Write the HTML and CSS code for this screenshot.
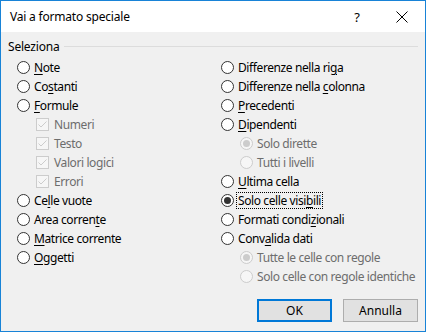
FILE: index.html
```html
<!DOCTYPE html>
<html lang="it">
<head>
<meta charset="utf-8">
<title>Vai a formato speciale</title>
<link rel="stylesheet" href="styles.css">
</head>
<body>
<div class="window">
  <div class="titlebar">
    <span class="title">Vai a formato speciale</span>
    <span class="tb-help">?</span>
    <span class="tb-close"><svg width="12" height="12" viewBox="0 0 12 12"><path d="M0.5 0.5 L11.5 11.5 M11.5 0.5 L0.5 11.5" stroke="#000" stroke-width="1" fill="none"/></svg></span>
  </div>
  <div class="body">
    <div class="legend"><span>Seleziona</span><span class="legend-line"></span></div>
    <div class="cols">
      <div class="col">
        <div class="opt"><span class="radio"></span><span><u>N</u>ote</span></div>
        <div class="opt"><span class="radio"></span><span>Co<u>s</u>tanti</span></div>
        <div class="opt"><span class="radio"></span><span><u>F</u>ormule</span></div>
        <div class="opt sub dis"><span class="check"><svg width="11" height="11" viewBox="0 0 11 11"><path d="M1.5 5.5 L4 8 L9.5 2.5" stroke="#cccccc" stroke-width="1" fill="none"/></svg></span><span>Numeri</span></div>
        <div class="opt sub dis"><span class="check"><svg width="11" height="11" viewBox="0 0 11 11"><path d="M1.5 5.5 L4 8 L9.5 2.5" stroke="#cccccc" stroke-width="1" fill="none"/></svg></span><span>Testo</span></div>
        <div class="opt sub dis"><span class="check"><svg width="11" height="11" viewBox="0 0 11 11"><path d="M1.5 5.5 L4 8 L9.5 2.5" stroke="#cccccc" stroke-width="1" fill="none"/></svg></span><span>Valori logici</span></div>
        <div class="opt sub dis"><span class="check"><svg width="11" height="11" viewBox="0 0 11 11"><path d="M1.5 5.5 L4 8 L9.5 2.5" stroke="#cccccc" stroke-width="1" fill="none"/></svg></span><span>Errori</span></div>
        <div class="opt"><span class="radio"></span><span>Ce<u>l</u>le vuote</span></div>
        <div class="opt"><span class="radio"></span><span>Area corren<u>t</u>e</span></div>
        <div class="opt"><span class="radio"></span><span><u>M</u>atrice corrente</span></div>
        <div class="opt"><span class="radio"></span><span><u>O</u>ggetti</span></div>
      </div>
      <div class="col">
        <div class="opt"><span class="radio"></span><span>Differenze nella ri<u>g</u>a</span></div>
        <div class="opt"><span class="radio"></span><span>Differenze nella <u>c</u>olonna</span></div>
        <div class="opt"><span class="radio"></span><span><u>P</u>recedenti</span></div>
        <div class="opt"><span class="radio"></span><span><u>D</u>ipendenti</span></div>
        <div class="opt sub dis"><span class="radio on"></span><span>Solo dirette</span></div>
        <div class="opt sub dis"><span class="radio"></span><span>Tutti i livelli</span></div>
        <div class="opt"><span class="radio"></span><span><u>U</u>ltima cella</span></div>
        <div class="opt"><span class="radio on"></span><span class="focus">Solo celle visi<u>b</u>ili</span></div>
        <div class="opt"><span class="radio"></span><span>Formati condi<u>z</u>ionali</span></div>
        <div class="opt"><span class="radio"></span><span>Conv<u>a</u>lida dati</span></div>
        <div class="opt sub dis"><span class="radio on"></span><span>Tutte le celle con regole</span></div>
        <div class="opt sub dis"><span class="radio"></span><span>Solo celle con regole identiche</span></div>
      </div>
    </div>
    <div class="footer">
      <button class="btn default">OK</button>
      <button class="btn">Annulla</button>
    </div>
  </div>
</div>
</body>
</html>
```
FILE: styles.css
```css
* { box-sizing: border-box; }
html, body { margin: 0; padding: 0; }
body {
  font-family: "Noto Sans", "Open Sans", sans-serif;
  font-size: 12px;
  color: #000;
  background: #f0f0f0;
}
.window {
  width: 426px;
  height: 332px;
  border: 1px solid #1883d7;
  display: flex;
  flex-direction: column;
  background: #f0f0f0;
}
.titlebar {
  height: 31px;
  background: #fff;
  display: flex;
  align-items: center;
  padding-left: 9px;
  flex: none;
}
.title { flex: 1; font-size: 12px; letter-spacing: -0.2px; }
.tb-help { width: 20px; text-align: center; margin-right: 29px; font-size: 13px; }
.tb-close { width: 12px; height: 12px; margin-right: 17px; display: flex; }
.body {
  flex: 1;
  display: flex;
  flex-direction: column;
  padding: 6px 7px 9px 7px;
}
.legend {
  display: flex;
  align-items: center;
  height: 16px;
  letter-spacing: -0.2px;
}
.legend-line {
  flex: 1;
  height: 1px;
  background: #dcdcdc;
  margin-left: 5px;
  margin-top: 1px;
}
.cols {
  display: grid;
  grid-template-columns: 204px 1fr;
  padding-left: 9px;
  margin-top: 4px;
}
.opt {
  height: 19px;
  display: flex;
  align-items: center;
  letter-spacing: -0.4px;
  white-space: nowrap;
}
.opt.sub { padding-left: 19px; }
.opt.dis { color: #6d6d6d; }
.radio {
  width: 13px;
  height: 13px;
  border: 1px solid #333;
  border-radius: 50%;
  background: #fff;
  margin-right: 4px;
  flex: none;
  display: flex;
  align-items: center;
  justify-content: center;
}
.radio.on::after {
  content: "";
  width: 7px;
  height: 7px;
  border-radius: 50%;
  background: #333;
}
.dis .radio { border-color: #cccccc; background: #f6f6f6; }
.dis .radio.on::after { background: #cccccc; }
.check {
  width: 13px;
  height: 13px;
  border: 1px solid #cccccc;
  background: #f6f6f6;
  margin-right: 5px;
  flex: none;
  display: flex;
}
.focus { outline: 1px dotted #000; outline-offset: 0; padding: 0 1px; margin-left: -1px; line-height: 15px; }
u { text-decoration-thickness: 1px; text-underline-offset: 2px; }
.footer {
  margin-top: auto;
  display: flex;
  justify-content: flex-end;
  gap: 11px;
}
.btn {
  width: 75px;
  height: 23px;
  font: inherit;
  font-size: 12px;
  color: #000;
  background: #e1e1e1;
  border: 1px solid #adadad;
  padding: 0;
}
.btn.default { border: 2px solid #0078d7; }
```
